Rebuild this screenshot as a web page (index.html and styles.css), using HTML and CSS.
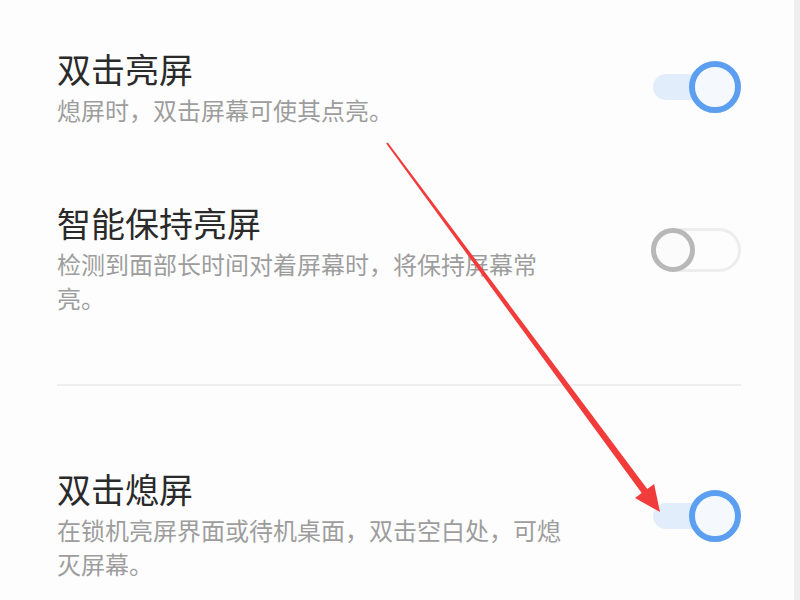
FILE: index.html
```html
<!DOCTYPE html>
<html lang="zh-CN">
<head>
<meta charset="utf-8">
<title>亮屏设置</title>
<link rel="stylesheet" href="styles.css">
</head>
<body>
<div class="screen">
  <div class="settings">
    <div class="row row-first">
      <div class="text">
        <div class="title">双击亮屏</div>
        <div class="desc">熄屏时，双击屏幕可使其点亮。</div>
      </div>
      <div class="switch switch-on"><span class="track"></span><span class="thumb"></span></div>
    </div>
    <div class="row row-multi">
      <div class="text">
        <div class="title">智能保持亮屏</div>
        <div class="desc">检测到面部长时间对着屏幕时，将保持屏幕常亮。</div>
      </div>
      <div class="switch switch-off"><span class="track"></span><span class="thumb"></span></div>
    </div>
    <div class="divider"></div>
    <div class="row row-multi row-last">
      <div class="text">
        <div class="title">双击熄屏</div>
        <div class="desc">在锁机亮屏界面或待机桌面，双击空白处，可熄灭屏幕。</div>
      </div>
      <div class="switch switch-on"><span class="track"></span><span class="thumb"></span></div>
    </div>
  </div>
  <div class="edge"></div>
  <svg class="arrow" width="800" height="600" viewBox="0 0 800 600" xmlns="http://www.w3.org/2000/svg">
    <polygon points="387.8,142.4 647.3,488.9 654.1,483.9 660,512 635.0,498.1 641.7,493.1 386.2,143.6" fill="#f23b3b"/>
  </svg>
</div>
</body>
</html>
```

FILE: styles.css
```css
* { box-sizing: border-box; }
html, body {
  margin: 0;
  padding: 0;
  background: #fdfdfd;
}
body {
  font-family: "Noto Sans CJK SC", "Noto Sans", sans-serif;
  width: 800px;
  height: 600px;
  overflow: hidden;
}
.screen {
  position: relative;
  display: flex;
  width: 800px;
  height: 600px;
}
.settings {
  flex: 0 0 794px;
  padding: 46px 53px 0 57px;
}
.edge {
  flex: 0 0 6px;
  background: #eeeeee;
}
.row {
  display: flex;
  align-items: center;
  justify-content: space-between;
}
.row + .row { margin-top: 73px; }
.title {
  font-size: 34px;
  line-height: 46px;
  color: #2a2a2a;
}
.desc {
  margin-top: 1px;
  font-size: 24px;
  line-height: 34px;
  color: #9d9d9d;
  max-width: 512px;
}
.divider {
  height: 2px;
  background: #eeeeee;
  margin: 69px 0 80px 0;
}
.switch {
  position: relative;
  width: 90px;
  height: 52px;
  flex: 0 0 90px;
}
.row-multi .switch { margin-bottom: 16px; }
.switch-on .track {
  position: absolute;
  left: 2px;
  right: 2px;
  top: 13px;
  height: 26px;
  border-radius: 13px;
  background: #e2edfc;
}
.switch-on .thumb {
  position: absolute;
  right: 0;
  top: 0;
  width: 52px;
  height: 52px;
  border-radius: 50%;
  border: 6px solid #5c9ff1;
  background: #f5f9fe;
}
.switch-off .track {
  position: absolute;
  left: 0;
  right: 0;
  top: 4px;
  height: 44px;
  border-radius: 22px;
  border: 3px solid #ededed;
  background: #fdfdfd;
}
.switch-off .thumb {
  position: absolute;
  left: 0;
  top: 4px;
  width: 44px;
  height: 44px;
  border-radius: 50%;
  border: 5px solid #b8b8b8;
  background: #fbfbfb;
}
.arrow {
  position: absolute;
  left: 0;
  top: 0;
  pointer-events: none;
}
```
